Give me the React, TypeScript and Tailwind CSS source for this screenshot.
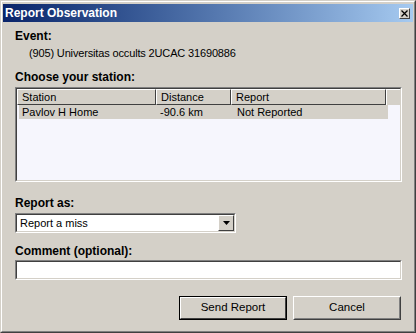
import React from 'react'

const font = { fontFamily: '"Liberation Sans", Arial, sans-serif' }

export default function App() {
    return (
        <div className="w-[416px] h-[333px] bg-[#d4d0c8] text-[11px] text-black border border-[#404040] border-t-[#d4d0c8] border-l-[#d4d0c8] overflow-hidden" style={font}>
            <div className="h-full border border-[#808080] border-t-white border-l-white p-px flex flex-col">
                {/* Title bar */}
                <div className="h-[18px] mt-px flex items-center justify-between pl-[2px] pr-[3px] bg-gradient-to-r from-[#0a246a] to-[#a6caf0]">
                    <span className="text-white font-bold text-[12px] leading-none">Report Observation</span>
                    <button className="w-[11px] h-[11px] bg-[#d4d0c8] border border-[#404040] border-t-white border-l-white flex items-center justify-center">
                        <svg width="7" height="7" viewBox="0 0 7 7">
                            <path d="M0.5 0.5L6.5 6.5M6.5 0.5L0.5 6.5" stroke="#000" strokeWidth="1.3" />
                        </svg>
                    </button>
                </div>

                {/* Body */}
                <div className="flex-1 pl-[12px] pr-[11px] pt-[7px] flex flex-col">
                    <div className="font-bold text-[12px] leading-[14px]">Event:</div>
                    <div className="pl-[14px] mt-[3px] leading-[14px] tracking-[-0.15px]">(905) Universitas occults 2UCAC 31690886</div>

                    <div className="font-bold text-[12px] leading-[14px] mt-[10px]">Choose your station:</div>
                    <div className="mt-[3px] h-[95px] border border-[#808080] border-r-white border-b-white">
                        <div className="h-full border border-[#404040] border-r-[#d4d0c8] border-b-[#d4d0c8] bg-[#f6f6fd]">
                            <div className="flex h-[16px]">
                                {[['Station', 139], ['Distance', 75], ['Report', 155]].map(([label, w]) => (
                                    <div key={label} className="h-full bg-[#d4d0c8] border border-[#404040] border-t-white border-l-white pl-[4px] leading-[14px]" style={{ width: w as number }}>
                                        {label}
                                    </div>
                                ))}
                                <div className="flex-1 h-full bg-[#d4d0c8] border-t border-l border-white" />
                            </div>
                            <div className="flex h-[14px] w-[369px] ml-[2px] bg-[#d4d0c8] leading-[14px]">
                                <div className="w-[137px] pl-[3px]">Pavlov H Home</div>
                                <div className="w-[75px] pl-[4px]">-90.6 km</div>
                                <div className="pl-[6px]">Not Reported</div>
                            </div>
                        </div>
                    </div>

                    <div className="font-bold text-[12px] leading-[14px] mt-[14px]">Report as:</div>
                    <div className="mt-[3px] w-[221px] h-[20px] border border-[#808080] border-r-white border-b-white">
                        <div className="h-full border border-[#404040] border-r-[#d4d0c8] border-b-[#d4d0c8] bg-white flex items-center">
                            <span className="flex-1 pl-[3px]">Report a miss</span>
                            <div className="w-[16px] h-full bg-[#d4d0c8] border border-[#404040] border-t-white border-l-white flex items-center justify-center">
                                <svg width="7" height="4" viewBox="0 0 7 4">
                                    <path d="M0 0H7L3.5 4Z" fill="#000" />
                                </svg>
                            </div>
                        </div>
                    </div>

                    <div className="font-bold text-[12px] leading-[14px] mt-[11px]">Comment (optional):</div>
                    <div className="mt-[2px] h-[20px] border border-[#808080] border-r-white border-b-white">
                        <div className="h-full border border-[#404040] border-r-[#d4d0c8] border-b-[#d4d0c8] bg-white" />
                    </div>

                    <div className="mt-[16px] flex justify-end gap-[6px] pr-[1px]">
                        <button className="w-[108px] h-[24px] border border-black">
                            <div className="h-full border border-[#404040] border-t-white border-l-white flex items-center justify-center text-[11.5px]">Send Report</div>
                        </button>
                        <button className="w-[108px] h-[24px] border border-[#404040] border-t-white border-l-white">
                            <div className="h-full border border-[#808080] border-t-[#d4d0c8] border-l-[#d4d0c8] flex items-center justify-center text-[11.5px]">Cancel</div>
                        </button>
                    </div>
                </div>
            </div>
        </div>
    )
}
